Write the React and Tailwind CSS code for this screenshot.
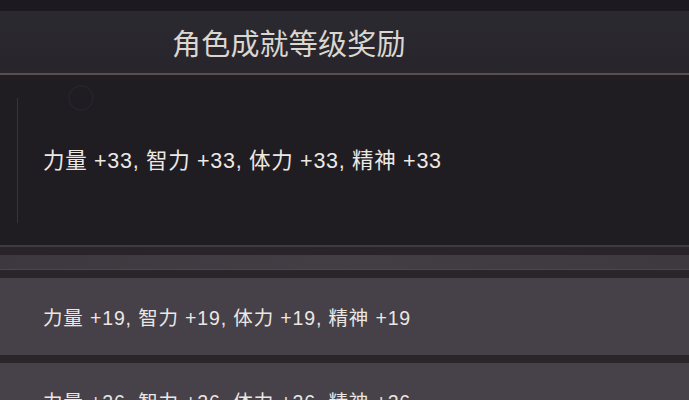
import React from "react";

const bodyFont = {
  fontFamily: '"Liberation Sans", "Noto Sans CJK SC", sans-serif',
};

function StatLine({ value, className }) {
  return (
    <span className={className} style={bodyFont}>
      力量 +{value}, 智力 +{value}, 体力 +{value}, 精神 +{value}
    </span>
  );
}

export default function App() {
  return (
    <div className="w-[689px] h-[400px] overflow-hidden bg-[#1d1b20] flex flex-col">
      {/* top strip */}
      <div className="h-[12px] shrink-0 bg-[#1c1a1f] border-b border-[#2c2a30]" />

      {/* title bar */}
      <div className="h-[61px] shrink-0 flex items-center pl-[172px] bg-gradient-to-b from-[#2c2a31] to-[#27252b]">
        <h1
          className="text-[29px] leading-none text-[#dcd6d0] tracking-[0.2px]"
          style={{ fontFamily: '"Noto Sans CJK SC", sans-serif' }}
        >
          角色成就等级奖励
        </h1>
      </div>
      <div className="h-[2px] shrink-0 bg-[#5b4e4f]" />

      {/* active reward */}
      <div className="h-[170px] shrink-0 bg-[#1f1c22] flex items-center relative">
        <div className="ml-[17px] w-px h-[125px] bg-[#37333a]" />
        <div className="absolute left-[68px] top-[10px] w-[26px] h-[26px] rounded-full border-2 border-[#25222a]" />
        <StatLine
          value={33}
          className="ml-[25px] mt-[4px] text-[21.5px] leading-none text-[#ece8e4] tracking-[0.7px] whitespace-nowrap"
        />
      </div>
      <div className="h-[2px] shrink-0 bg-[#3f3a40]" />
      <div className="h-[8px] shrink-0 bg-[#28242a]" />
      <div className="h-[14px] shrink-0 bg-gradient-to-r from-[#3d383f] via-[#433d44] to-[#3e383f]" />
      <div className="h-px shrink-0 bg-[#4d474c]" />
      <div className="h-[8px] shrink-0 bg-[#2a2529]" />

      {/* next reward */}
      <div className="h-[77px] shrink-0 bg-[#464048] flex items-center pl-[43px]">
        <StatLine
          value={19}
          className="mt-[5px] text-[19.5px] leading-none text-[#ebe7e3] tracking-[0.85px] whitespace-nowrap"
        />
      </div>
      <div className="h-[8px] shrink-0 bg-[#2b262a]" />

      {/* following reward */}
      <div className="flex-1 bg-[#474149] pl-[43px] pt-[30px]">
        <StatLine
          value={26}
          className="block text-[19.5px] leading-none text-[#ebe7e3] tracking-[0.85px] whitespace-nowrap"
        />
      </div>
    </div>
  );
}
